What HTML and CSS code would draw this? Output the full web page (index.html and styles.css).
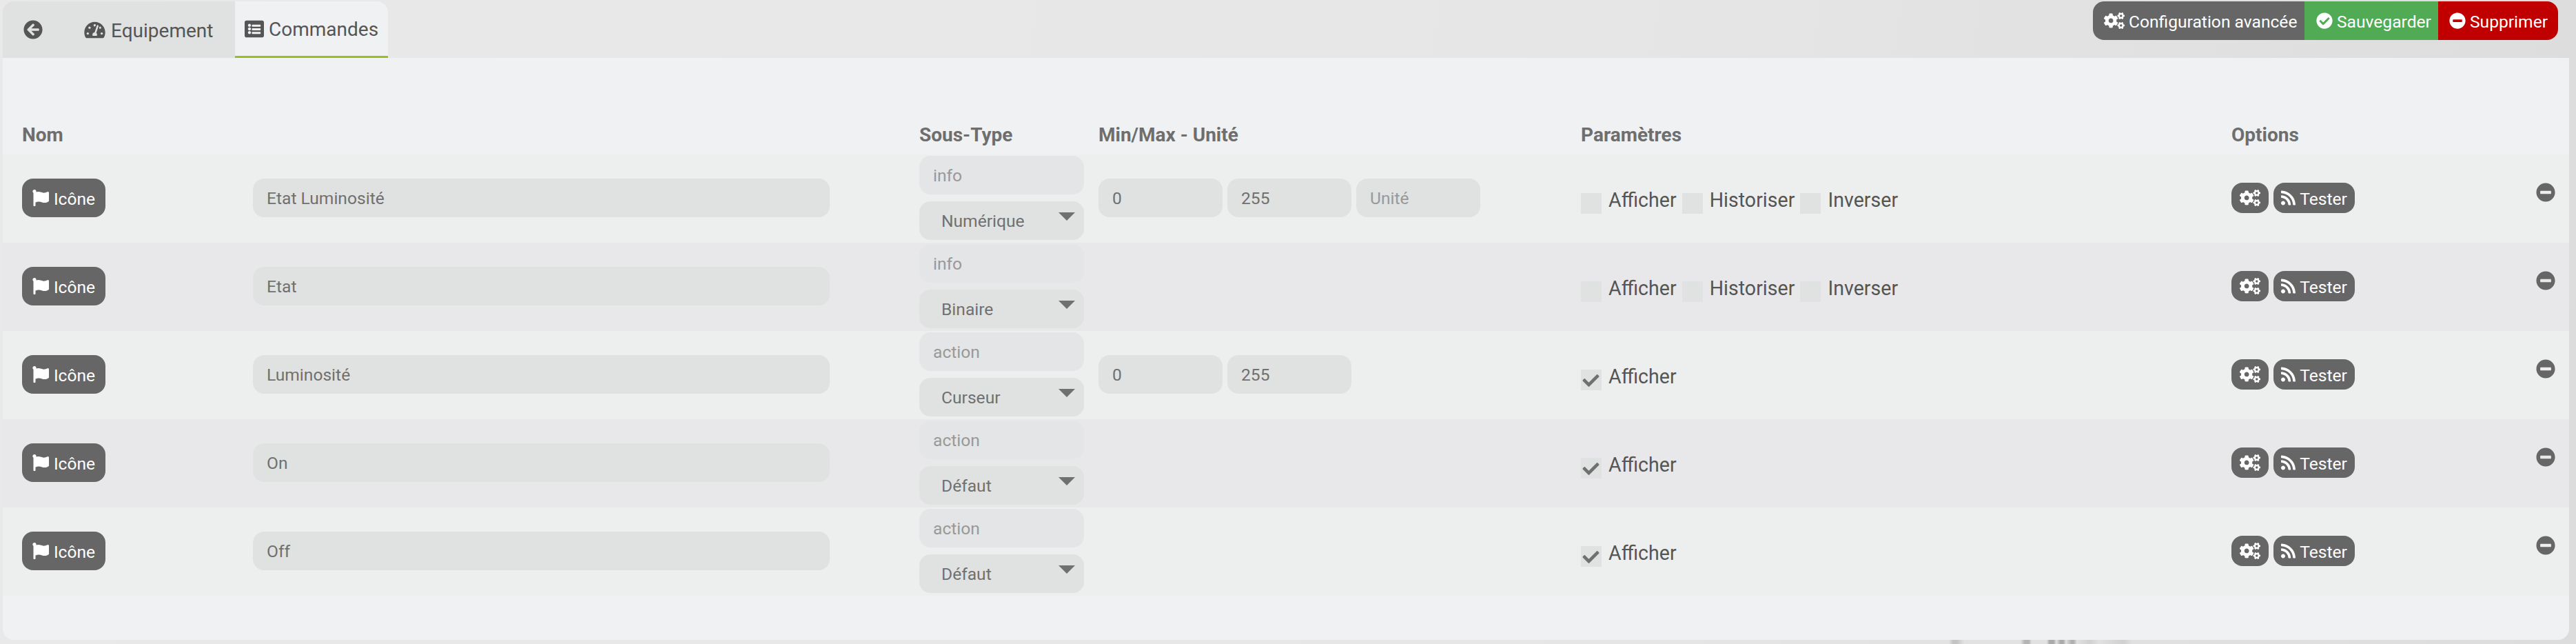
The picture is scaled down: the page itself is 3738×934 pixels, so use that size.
FILE: index.html
```html
<!DOCTYPE html>
<html lang="fr">
<head>
<meta charset="utf-8">
<title>Commandes</title>
<link rel="stylesheet" href="styles.css">
</head>
<body>
<svg class="defs" width="0" height="0" aria-hidden="true">
  <defs>
    <symbol id="gear" viewBox="0 0 640 512"><path d="M512.1 191l-8.2 14.3c-3 5.3-9.4 7.5-15.1 5.4-11.8-4.4-22.6-10.7-32.1-18.6-4.6-3.8-5.8-10.5-2.8-15.7l8.2-14.3c-6.9-8-12.3-17.3-15.9-27.4h-16.5c-6 0-11.2-4.3-12.2-10.3-2-12-2.1-24.6 0-37.1 1-6 6.2-10.4 12.2-10.4h16.5c3.6-10.1 9-19.4 15.9-27.4l-8.2-14.3c-3-5.2-1.9-11.9 2.8-15.7 9.5-7.9 20.4-14.2 32.1-18.6 5.7-2.1 12.1.1 15.1 5.4l8.2 14.3c10.5-1.9 21.2-1.9 31.7 0L552 6.3c3-5.3 9.4-7.5 15.1-5.4 11.8 4.4 22.6 10.7 32.1 18.6 4.6 3.8 5.8 10.5 2.8 15.7l-8.2 14.3c6.9 8 12.3 17.3 15.9 27.4h16.5c6 0 11.2 4.3 12.2 10.3 2 12 2.1 24.6 0 37.1-1 6-6.2 10.4-12.2 10.4h-16.5c-3.6 10.1-9 19.4-15.9 27.4l8.2 14.3c3 5.2 1.9 11.9-2.8 15.7-9.5 7.9-20.4 14.2-32.1 18.6-5.7 2.1-12.1-.1-15.1-5.4l-8.2-14.3c-10.4 1.9-21.2 1.9-31.7 0zm-10.5-58.8c38.5 29.6 82.4-14.3 52.8-52.8-38.5-29.7-82.4 14.3-52.8 52.8zM386.3 286.1l33.7 16.8c10.1 5.8 14.5 18.1 10.5 29.1-8.9 24.2-26.4 46.4-42.6 65.8-7.4 8.9-20.2 11.1-30.3 5.3l-29.1-16.8c-16 13.7-34.6 24.6-54.9 31.7v33.6c0 11.6-8.3 21.6-19.7 23.6-24.6 4.2-50.4 4.4-75.9 0-11.5-2-20-11.9-20-23.6V418c-20.3-7.2-38.9-18-54.9-31.7L74 403c-10 5.8-22.9 3.6-30.3-5.3-16.2-19.4-33.3-41.6-42.2-65.7-4-10.9.4-23.2 10.5-29.1l33.3-16.8c-3.9-20.9-3.9-42.4 0-63.4L12 205.8c-10.1-5.8-14.6-18.1-10.5-29 8.9-24.2 26-46.4 42.2-65.8 7.4-8.9 20.2-11.1 30.3-5.3l29.1 16.8c16-13.7 34.6-24.6 54.9-31.7V57.1c0-11.5 8.2-21.5 19.6-23.5 24.6-4.2 50.5-4.4 76-.1 11.5 2 20 11.9 20 23.6v33.6c20.3 7.2 38.9 18 54.9 31.7l29.1-16.8c10-5.8 22.9-3.6 30.3 5.3 16.2 19.4 33.2 41.6 42.1 65.8 4 10.9.1 23.2-10 29.1l-33.7 16.8c3.9 21 3.9 42.5 0 63.5zm-117.6 21.1c59.2-77-28.7-164.9-105.7-105.7-59.2 77 28.7 164.9 105.7 105.7zm243.4 182.7l-8.2 14.3c-3 5.3-9.4 7.5-15.1 5.4-11.8-4.4-22.6-10.7-32.1-18.6-4.6-3.8-5.8-10.5-2.8-15.7l8.2-14.3c-6.9-8-12.3-17.3-15.9-27.4h-16.5c-6 0-11.2-4.3-12.2-10.3-2-12-2.1-24.6 0-37.1 1-6 6.2-10.4 12.2-10.4h16.5c3.6-10.1 9-19.4 15.9-27.4l-8.2-14.3c-3-5.2-1.9-11.9 2.8-15.7 9.5-7.9 20.4-14.2 32.1-18.6 5.7-2.1 12.1.1 15.1 5.4l8.2 14.3c10.5-1.9 21.2-1.9 31.7 0l8.2-14.3c3-5.3 9.4-7.5 15.1-5.4 11.8 4.4 22.6 10.7 32.1 18.6 4.6 3.8 5.8 10.5 2.8 15.7l-8.2 14.3c6.9 8 12.3 17.3 15.9 27.4h16.5c6 0 11.2 4.3 12.2 10.3 2 12 2.1 24.6 0 37.1-1 6-6.2 10.4-12.2 10.4h-16.5c-3.6 10.1-9 19.4-15.9 27.4l8.2 14.3c3 5.2 1.9 11.9-2.8 15.7-9.5 7.9-20.4 14.2-32.1 18.6-5.7 2.1-12.1-.1-15.1-5.4l-8.2-14.3c-10.4 1.9-21.2 1.9-31.7 0zM501.6 431c38.5 29.6 82.4-14.3 52.8-52.8-38.5-29.6-82.4 14.3-52.8 52.8z"/></symbol>
    <symbol id="flag" viewBox="0 0 512 512"><path d="M349.565 98.783C295.978 98.783 251.721 64 184.348 64c-24.955 0-47.309 4.384-68.045 12.013a55.947 55.947 0 0 0 3.586-23.562C118.117 24.015 94.806 1.206 66.338.048 34.345-1.254 8 24.296 8 56c0 19.026 9.497 35.825 24 45.945V488c0 13.255 10.745 24 24 24h16c13.255 0 24-10.745 24-24v-94.4c28.311-12.064 63.582-22.122 114.435-22.122 53.588 0 97.844 34.783 165.217 34.783 48.169 0 86.667-16.294 122.505-40.858C506.84 359.452 512 349.571 512 339.045v-243.1c0-23.393-24.269-38.87-45.485-29.016-34.338 15.948-76.454 31.854-116.95 31.854z"/></symbol>
    <symbol id="rss" viewBox="0 0 448 512"><path d="M128.081 415.959c0 35.369-28.672 64.041-64.041 64.041S0 451.328 0 415.959s28.672-64.041 64.041-64.041 64.04 28.673 64.04 64.041zm175.66 47.25c-8.354-154.6-132.185-278.587-286.95-286.95C7.656 175.765 0 183.105 0 192.253v48.069c0 8.415 6.49 15.472 14.887 16.018 111.832 7.284 201.473 96.702 208.772 208.772.547 8.397 7.604 14.887 16.018 14.887h48.069c9.149.001 16.489-7.655 15.995-16.79zm144.249.288C439.596 229.677 251.465 40.445 16.503 32.01 7.473 31.686 0 38.981 0 48.016v48.068c0 8.625 6.835 15.645 15.453 15.999 191.179 7.839 344.627 161.316 352.465 352.465.353 8.618 7.373 15.453 15.999 15.453h48.068c9.034-.001 16.329-7.474 16.005-16.504z"/></symbol>
    <symbol id="minus" viewBox="0 0 512 512"><path d="M256 8C119 8 8 119 8 256s111 248 248 248 248-111 248-248S393 8 256 8zM124 296c-6.6 0-12-5.4-12-12v-56c0-6.6 5.4-12 12-12h264c6.6 0 12 5.4 12 12v56c0 6.6-5.4 12-12 12H124z"/></symbol>
    <symbol id="check-circle" viewBox="0 0 512 512"><path d="M504 256c0 136.967-111.033 248-248 248S8 392.967 8 256 119.033 8 256 8s248 111.033 248 248zM227.314 387.314l184-184c6.248-6.248 6.248-16.379 0-22.627l-22.627-22.627c-6.248-6.249-16.379-6.249-22.628 0L216 308.118l-70.059-70.059c-6.248-6.248-16.379-6.248-22.628 0l-22.627 22.627c-6.248 6.248-6.248 16.379 0 22.627l104 104c6.249 6.249 16.379 6.249 22.628.001z"/></symbol>
    <symbol id="back" viewBox="0 0 512 512"><path d="M256 504C119 504 8 393 8 256S119 8 256 8s248 111 248 248-111 248-248 248zm28.9-143.6L209.4 288H392c13.3 0 24-10.7 24-24v-16c0-13.3-10.7-24-24-24H209.4l75.5-72.4c9.7-9.3 9.9-24.8.4-34.3l-11-10.9c-9.4-9.4-24.6-9.4-33.9 0L107.7 239c-9.4 9.4-9.4 24.6 0 33.9l132.7 132.7c9.4 9.4 24.6 9.4 33.9 0l11-10.9c9.5-9.5 9.3-25-.4-34.3z"/></symbol>
    <symbol id="gauge" viewBox="0 0 576 512"><path d="M288 32C128.94 32 0 160.94 0 320c0 52.8 14.25 102.26 39.06 144.8 5.61 9.62 16.3 15.2 27.44 15.2h443c11.14 0 21.83-5.58 27.44-15.2C561.75 422.26 576 372.8 576 320c0-159.06-128.94-288-288-288zm0 64c14.71 0 26.58 10.13 30.32 23.65-1.11 2.26-2.64 4.23-3.45 6.67l-9.22 27.67c-5.13 3.49-10.97 6.01-17.64 6.01-17.67 0-32-14.33-32-32S270.33 96 288 96zM96 384c-17.67 0-32-14.33-32-32s14.33-32 32-32 32 14.33 32 32-14.33 32-32 32zm48-160c-17.67 0-32-14.33-32-32s14.33-32 32-32 32 14.33 32 32-14.33 32-32 32zm246.77-72.41l-61.33 184C343.13 347.33 352 364.54 352 384c0 11.72-3.38 22.55-8.88 32H232.88c-5.5-9.45-8.88-20.28-8.88-32 0-33.94 26.5-61.43 59.9-63.59l61.34-184.01c4.17-12.56 17.73-19.45 30.36-15.17 12.57 4.19 19.35 17.79 15.17 30.36zm14.66 57.2l15.52-46.55c3.47-1.29 7.13-2.23 11.05-2.23 17.67 0 32 14.33 32 32s-14.33 32-32 32c-11.38 0-20.89-6.28-26.57-15.22zM480 384c-17.67 0-32-14.33-32-32s14.33-32 32-32 32 14.33 32 32-14.33 32-32 32z"/></symbol>
    <symbol id="list" viewBox="0 0 512 512"><path d="M464 480H48c-26.51 0-48-21.49-48-48V80c0-26.51 21.49-48 48-48h416c26.51 0 48 21.49 48 48v352c0 26.51-21.49 48-48 48zM128 120c-22.091 0-40 17.909-40 40s17.909 40 40 40 40-17.909 40-40-17.909-40-40-40zm0 96c-22.091 0-40 17.909-40 40s17.909 40 40 40 40-17.909 40-40-17.909-40-40-40zm0 96c-22.091 0-40 17.909-40 40s17.909 40 40 40 40-17.909 40-40-17.909-40-40-40zm296-128v-32c0-6.627-5.373-12-12-12H204c-6.627 0-12 5.373-12 12v32c0 6.627 5.373 12 12 12h208c6.627 0 12-5.373 12-12zm0 96v-32c0-6.627-5.373-12-12-12H204c-6.627 0-12 5.373-12 12v32c0 6.627 5.373 12 12 12h208c6.627 0 12-5.373 12-12zm0 96v-32c0-6.627-5.373-12-12-12H204c-6.627 0-12 5.373-12 12v32c0 6.627 5.373 12 12 12h208c6.627 0 12-5.373 12-12z"/></symbol>
    <symbol id="tick" viewBox="0 0 512 512"><path d="M173.898 439.404l-166.4-166.4c-9.997-9.997-9.997-26.206 0-36.204l36.203-36.204c9.997-9.998 26.207-9.998 36.204 0L192 312.69 432.095 72.596c9.997-9.997 26.207-9.997 36.204 0l36.203 36.204c9.997 9.997 9.997 26.206 0 36.204l-294.4 294.401c-9.998 9.997-26.207 9.997-36.204-.001z"/></symbol>
  </defs>
</svg>

<header class="topbar">
  <nav class="tabs">
    <a class="tab tab-back"><svg class="ico ico-back"><use href="#back"/></svg></a>
    <a class="tab tab-eq"><svg class="ico ico-gauge"><use href="#gauge"/></svg><span class="txt">Equipement</span></a>
    <a class="tab tab-active"><svg class="ico ico-list"><use href="#list"/></svg><span class="txt">Commandes</span></a>
  </nav>
  <div class="actions">
    <a class="act act-conf"><svg class="ico ico-gear"><use href="#gear"/></svg><span class="txt">Configuration avancée</span></a>
    <a class="act act-save"><svg class="ico ico-circ"><use href="#check-circle"/></svg><span class="txt">Sauvegarder</span></a>
    <a class="act act-del"><svg class="ico ico-circ"><use href="#minus"/></svg><span class="txt">Supprimer</span></a>
  </div>
</header>

<main class="panel">
  <div class="row head">
    <div>Nom</div><div></div><div>Sous-Type</div><div>Min/Max - Unité</div><div>Paramètres</div><div>Options</div><div></div>
  </div>

  <div class="row cmd">
    <div><a class="btn btn-icon"><svg class="ico ico-flag"><use href="#flag"/></svg><span class="txt">Icône</span></a></div>
    <div><div class="field name">Etat Luminosité</div></div>
    <div class="subtype"><div class="field type">info</div><div class="field select">Numérique</div></div>
    <div class="minmax"><div class="field num">0</div><div class="field num">255</div><div class="field num ph">Unité</div></div>
    <div class="params">
      <span class="box"></span><span class="lab">Afficher</span>
      <span class="box"></span><span class="lab">Historiser</span>
      <span class="box"></span><span class="lab">Inverser</span>
    </div>
    <div class="opts"><a class="btn btn-gear"><svg class="ico ico-gear"><use href="#gear"/></svg></a><a class="btn btn-test"><svg class="ico ico-rss"><use href="#rss"/></svg><span class="txt">Tester</span></a></div>
    <div class="rm"><svg class="ico ico-rm"><use href="#minus"/></svg></div>
  </div>

  <div class="row cmd">
    <div><a class="btn btn-icon"><svg class="ico ico-flag"><use href="#flag"/></svg><span class="txt">Icône</span></a></div>
    <div><div class="field name">Etat</div></div>
    <div class="subtype"><div class="field type">info</div><div class="field select">Binaire</div></div>
    <div class="minmax"></div>
    <div class="params">
      <span class="box"></span><span class="lab">Afficher</span>
      <span class="box"></span><span class="lab">Historiser</span>
      <span class="box"></span><span class="lab">Inverser</span>
    </div>
    <div class="opts"><a class="btn btn-gear"><svg class="ico ico-gear"><use href="#gear"/></svg></a><a class="btn btn-test"><svg class="ico ico-rss"><use href="#rss"/></svg><span class="txt">Tester</span></a></div>
    <div class="rm"><svg class="ico ico-rm"><use href="#minus"/></svg></div>
  </div>

  <div class="row cmd">
    <div><a class="btn btn-icon"><svg class="ico ico-flag"><use href="#flag"/></svg><span class="txt">Icône</span></a></div>
    <div><div class="field name">Luminosité</div></div>
    <div class="subtype"><div class="field type">action</div><div class="field select">Curseur</div></div>
    <div class="minmax"><div class="field num">0</div><div class="field num">255</div></div>
    <div class="params">
      <span class="box"><svg class="ico ico-tick"><use href="#tick"/></svg></span><span class="lab">Afficher</span>
    </div>
    <div class="opts"><a class="btn btn-gear"><svg class="ico ico-gear"><use href="#gear"/></svg></a><a class="btn btn-test"><svg class="ico ico-rss"><use href="#rss"/></svg><span class="txt">Tester</span></a></div>
    <div class="rm"><svg class="ico ico-rm"><use href="#minus"/></svg></div>
  </div>

  <div class="row cmd">
    <div><a class="btn btn-icon"><svg class="ico ico-flag"><use href="#flag"/></svg><span class="txt">Icône</span></a></div>
    <div><div class="field name">On</div></div>
    <div class="subtype"><div class="field type">action</div><div class="field select">Défaut</div></div>
    <div class="minmax"></div>
    <div class="params">
      <span class="box"><svg class="ico ico-tick"><use href="#tick"/></svg></span><span class="lab">Afficher</span>
    </div>
    <div class="opts"><a class="btn btn-gear"><svg class="ico ico-gear"><use href="#gear"/></svg></a><a class="btn btn-test"><svg class="ico ico-rss"><use href="#rss"/></svg><span class="txt">Tester</span></a></div>
    <div class="rm"><svg class="ico ico-rm"><use href="#minus"/></svg></div>
  </div>

  <div class="row cmd">
    <div><a class="btn btn-icon"><svg class="ico ico-flag"><use href="#flag"/></svg><span class="txt">Icône</span></a></div>
    <div><div class="field name">Off</div></div>
    <div class="subtype"><div class="field type">action</div><div class="field select">Défaut</div></div>
    <div class="minmax"></div>
    <div class="params">
      <span class="box"><svg class="ico ico-tick"><use href="#tick"/></svg></span><span class="lab">Afficher</span>
    </div>
    <div class="opts"><a class="btn btn-gear"><svg class="ico ico-gear"><use href="#gear"/></svg></a><a class="btn btn-test"><svg class="ico ico-rss"><use href="#rss"/></svg><span class="txt">Tester</span></a></div>
    <div class="rm"><svg class="ico ico-rm"><use href="#minus"/></svg></div>
  </div>
</main>
</body>
</html>
```
FILE: styles.css
```css
* { box-sizing: border-box; }
html, body { margin: 0; height: 934px; overflow: hidden; }
body {
  padding: 2px 10px 0 4px;
  background: linear-gradient(100deg, #e9e9e9 0%, #e6e6e6 60%, #dcdcdc 100%);
  font-family: Roboto, "Liberation Sans", sans-serif;
  font-size: 24.6px;
  color: #555;
  position: relative;
}
body::after {
  content: ""; position: absolute; left: 2820px; bottom: 0; width: 290px; height: 6px;
  background: linear-gradient(90deg,
    transparent 0 8px, #c4c4c4 14px 20px, transparent 30px,
    transparent 112px, #b4b4b4 118px 124px, transparent 128px,
    transparent 150px, #aaa 154px 160px, transparent 164px,
    #aaa 170px 174px, transparent 178px,
    #b0b0b0 186px 189px, transparent 194px,
    #d0d0d0 212px, transparent 226px,
    #d0d0d0 262px, transparent 274px);
}
.defs { position: absolute; }
.ico { display: block; fill: currentColor; flex: none; }
.txt { position: relative; top: 1px; }

.topbar { display: flex; justify-content: space-between; height: 82px; padding-right: 16px; }
.tabs { display: flex; }
.tab { display: flex; align-items: center; font-size: 28px; background: #e0e2e1; color: #555; }
.tab-back { width: 118px; padding-left: 30px; border-top-left-radius: 16px; }
.tab-eq { width: 219px; gap: 8px; }
.tab-active {
  width: 222px; padding-left: 14px; gap: 7px;
  background: #f0f1f3; border-top-right-radius: 16px; border-bottom: 3px solid #95c11f;
}
.ico-back { width: 28px; height: 28px; }
.ico-gauge { width: 31px; height: 27px; }
.ico-list { width: 28px; height: 28px; }

.actions { display: flex; height: 56px; }
.act { display: flex; align-items: center; color: #fff; gap: 6px; }
.act-conf { width: 307px; padding-left: 16px; background: #666; border-radius: 16px 0 0 16px; }
.act-save { width: 194px; padding-left: 17px; background: #50ab54; }
.act-del { width: 174px; padding-left: 16px; background: #c00000; border-radius: 0 16px 16px 0; }
.act .ico-gear { width: 30px; height: 24px; }
.ico-circ { width: 24px; height: 24px; }

.panel { height: 844px; padding-top: 60px; background: #f0f1f3; border-radius: 0 0 16px 16px; }
.row {
  display: grid;
  grid-template-columns: 335px 967px 260px 700px 944px 442px 1fr;
  padding-left: 28px;
}
.head { height: 80px; padding-top: 36px; font-size: 28px; font-weight: 700; line-height: 32px; color: #6e6e6e; }
.cmd { height: 128px; background: #edefee; }
.cmd:nth-child(odd) { background: #e8e8ea; }

.field { height: 56px; border-radius: 16px; background: #e0e2e1; color: #707070; line-height: 58px; padding-left: 20px; }
.name { width: 837px; margin-top: 35px; }
.subtype { padding-top: 2px; display: flex; flex-direction: column; gap: 10px; }
.type { width: 239px; background: #e4e5e6; color: #999; }
.select { width: 239px; padding-left: 32px; position: relative; }
.select::after {
  content: ""; position: absolute; top: 16px; right: 13px;
  border-left: 12px solid transparent; border-right: 12px solid transparent; border-top: 12px solid #707070;
}
.minmax { display: flex; gap: 7px; padding-top: 35px; }
.num { width: 180px; }
.ph { color: #999; }

.params { display: flex; align-items: flex-start; padding-top: 47px; font-size: 28.6px; line-height: 38px; }
.box { width: 30px; height: 30px; margin-top: 9px; background: #e0e2e1; margin-right: 10px; position: relative; }
.lab { margin-right: 8px; }
.ico-tick { position: absolute; left: 0; top: 4px; width: 29px; height: 24px; color: #707070; }

.btn { display: flex; align-items: center; justify-content: center; background: #666; color: #fff; border-radius: 16px; }
.btn-icon { width: 121px; height: 56px; margin-top: 35px; gap: 7px; }
.ico-flag { width: 24px; height: 24px; }
.opts { display: flex; gap: 7px; padding-top: 41px; }
.btn-gear { width: 54px; height: 44px; }
.btn-gear .ico-gear { width: 30px; height: 24px; }
.btn-test { width: 118px; height: 44px; gap: 6px; }
.ico-rss { width: 21px; height: 24px; }
.rm { padding-top: 41px; color: #666; }
.ico-rm { width: 28px; height: 28px; }
```
